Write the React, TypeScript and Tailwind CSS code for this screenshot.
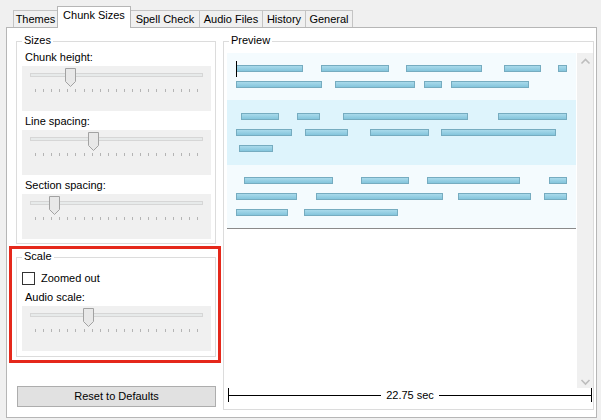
import React from 'react';

type Bar = [number, number];

// chunk preview data: [start, width] in px, relative to the line's left edge
const ROWS: { bg: string; py: string; lines: Bar[][] }[] = [
  {
    bg: 'bg-[#f4fbfe]',
    py: 'pt-[12px] pb-[12px]',
    lines: [
      [[0, 67], [85, 68], [170, 76], [268, 37], [322, 9]],
      [[0, 86], [99, 80], [188, 18], [215, 78]],
    ],
  },
  {
    bg: 'bg-[#def4fc]',
    py: 'pt-[13px] pb-[13px]',
    lines: [
      [[5, 38], [61, 23], [107, 125], [262, 69]],
      [[0, 56], [69, 43], [134, 59], [205, 115]],
      [[3, 34]],
    ],
  },
  {
    bg: 'bg-[#f4fbfe]',
    py: 'pt-[12px] pb-[12px]',
    lines: [
      [[8, 89], [125, 48], [191, 93], [313, 18]],
      [[0, 61], [80, 127], [222, 73], [308, 23]],
      [[0, 52], [68, 94]],
    ],
  },
];

const TABS = [
  { label: 'Themes', w: 'w-[45px]' },
  { label: 'Chunk Sizes', w: 'w-[74px]', active: true },
  { label: 'Spell Check', w: 'w-[70px]' },
  { label: 'Audio Files', w: 'w-[64px]' },
  { label: 'History', w: 'w-[44px]' },
  { label: 'General', w: 'w-[48px]' },
];

function GroupBox({ label, className, children }: { label: string; className: string; children?: React.ReactNode }) {
  return (
    <div className={`relative border border-[#dcdcdc] ${className}`}>
      <span className="absolute -top-[8px] left-[5px] bg-white px-[2px] leading-[13px]">{label}</span>
      {children}
    </div>
  );
}

function Label({ children, className = '' }: { children: React.ReactNode; className?: string }) {
  return <div className={`pl-[8px] h-[13px] leading-[13px] ${className}`}>{children}</div>;
}

function Slider({ thumb }: { thumb: number }) {
  return (
    <div className="relative mt-[2px] ml-[5px] mr-[4px] h-[45px] bg-[#f0f0f0]">
      <div className="mx-[8px] pt-[7px]">
        <div className="h-[4px] border border-[#d6d6d6] bg-[#e7eaea]" />
      </div>
      <div className="mx-[13px] mt-[12px] flex justify-between">
        {Array.from({ length: 21 }).map((_, i) => (
          <div key={i} className="w-px h-[3px] bg-[#b4b4b4]" />
        ))}
      </div>
      <svg
        className="absolute top-[2px]"
        style={{ left: thumb }}
        width="12"
        height="19"
        viewBox="0 0 12 19"
      >
        <path d="M0.5 0.5H10.5V13.5L5.5 18.5L0.5 13.5Z" fill="#e8e8e8" stroke="#a2a2a2" />
      </svg>
    </div>
  );
}

function Chevron({ up }: { up?: boolean }) {
  return (
    <svg width="17" height="17" viewBox="0 0 17 17">
      <polyline
        points={up ? '4.5,10.5 8.5,6.5 12.5,10.5' : '4.5,7 8.5,11 12.5,7'}
        fill="none"
        stroke="#bdbdbd"
        strokeWidth="1.6"
      />
    </svg>
  );
}

export default function App() {
  return (
    <div className="w-[601px] h-[420px] bg-[#f0f0f0] pt-[6px] overflow-hidden font-['Liberation_Sans',Arial,sans-serif] text-[11px] leading-[13px] text-black">
      {/* tabs */}
      <div className="relative z-10 h-[22px] flex items-end pl-[13px]">
        {TABS.map((t, i) =>
          t.active ? (
            <div
              key={t.label}
              className={`relative z-10 -ml-px h-[22px] ${t.w} bg-white border border-b-0 border-[#b6b6b6] flex justify-center pt-[2px]`}
            >
              {t.label}
            </div>
          ) : (
            <div
              key={t.label}
              className={`${i > 0 ? '-ml-px' : ''} h-[17px] mb-[1px] ${t.w} bg-[#f0f0f0] border border-b-0 border-[#c4c4c4] flex items-center justify-center`}
            >
              {t.label}
            </div>
          )
        )}
      </div>

      {/* page */}
      <div className="relative -mt-px ml-[6px] w-[591px] h-[391px] bg-white border border-[#b6b6b6] flex items-start">
        {/* left column */}
        <div className="ml-[9px] mt-[13px] w-[200px]">
          <GroupBox label="Sizes" className="h-[203px] pt-[9px]">
            <Label>Chunk height:</Label>
            <Slider thumb={43} />
            <Label className="mt-[4px]">Line spacing:</Label>
            <Slider thumb={66} />
            <Label className="mt-[4px]">Section spacing:</Label>
            <Slider thumb={27} />
          </GroupBox>

          <GroupBox label="Scale" className="mt-[13px] h-[100px] pt-[14px]">
            <div className="flex items-center h-[13px] ml-[5px]">
              <div className="w-[13px] h-[13px] border border-[#333333] bg-white" />
              <span className="ml-[6px]">Zoomed out</span>
            </div>
            <Label className="mt-[6px]">Audio scale:</Label>
            <Slider thumb={61} />
          </GroupBox>

          <button className="mt-[29px] ml-[1px] w-[199px] h-[21px] bg-[#e1e1e1] border border-[#adadad] flex items-center justify-center">
            Reset to Defaults
          </button>
        </div>

        {/* preview */}
        <GroupBox label="Preview" className="ml-[7px] mt-[13px] w-[371px] h-[369px] pt-[11px] pl-[3px]">
          <div className="flex h-[335px] w-[366px]">
            <div className="w-[349px]">
              {ROWS.map((row, ri) => (
                <div key={ri} className={`relative ${row.bg} ${row.py} flex flex-col gap-[9px]`}>
                  {ri === 0 && <div className="absolute left-[9px] top-[8px] w-px h-[16px] bg-black" />}
                  {row.lines.map((line, li) => (
                    <div key={li} className="ml-[9px] w-[331px] h-[7px] overflow-hidden flex">
                      {line.map(([start, width], bi) => {
                        const prevEnd = bi === 0 ? 0 : line[bi - 1][0] + line[bi - 1][1];
                        return (
                          <div
                            key={bi}
                            className="shrink-0 h-[7px] border border-[#76acc0] bg-gradient-to-b from-[#a9daeb] to-[#84c5dc]"
                            style={{ marginLeft: start - prevEnd, width }}
                          />
                        );
                      })}
                    </div>
                  ))}
                </div>
              ))}
              <div className="h-px bg-[#8a8a8a]" />
            </div>
            <div className="ml-px w-[16px] bg-[#f0f0f0] flex flex-col justify-between">
              <Chevron up />
              <div className="mb-[-2px]">
                <Chevron />
              </div>
            </div>
          </div>

          <div className="ml-[1px] mr-[1px] h-[14px] flex items-center">
            <div className="w-px h-[14px] bg-black" />
            <div className="flex-1 h-px bg-black" />
            <span className="px-[5px]">22.75 sec</span>
            <div className="flex-1 h-px bg-black" />
            <div className="w-px h-[14px] bg-black" />
          </div>
        </GroupBox>

        {/* highlight annotation */}
        <div className="absolute left-[2px] top-[218px] w-[212px] h-[117px] border-[3px] border-[#e5281b]" />
      </div>
    </div>
  );
}
